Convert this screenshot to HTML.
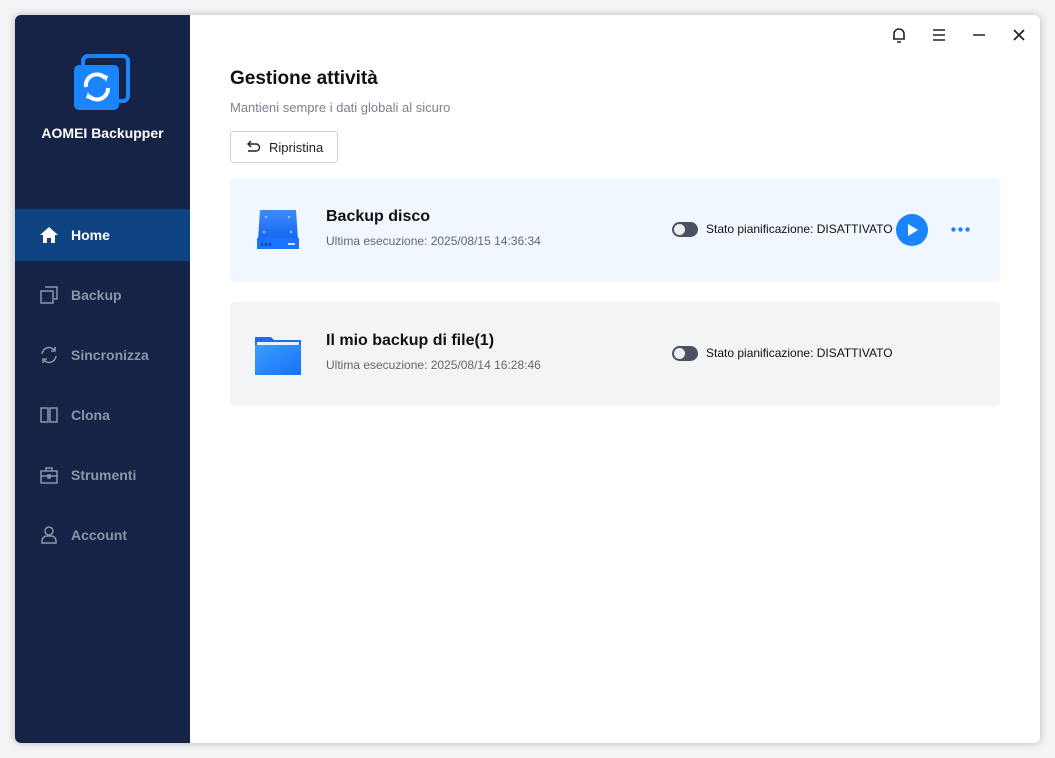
<!DOCTYPE html>
<html><head><meta charset="utf-8"><style>
*{margin:0;padding:0;box-sizing:border-box}
body{width:1055px;height:758px;background:#f3f4f6;font-family:"Liberation Sans",sans-serif;position:relative;overflow:hidden}
.win{position:absolute;left:15px;top:15px;width:1025px;height:728px;background:#fff;border-radius:6px;overflow:hidden;box-shadow:0 0 8px rgba(0,0,0,.25)}
.side{position:absolute;left:0;top:0;width:175px;height:728px;background:#142346}
.brand{position:absolute;top:110px;left:0;width:175px;text-align:center;color:#fff;font-weight:bold;font-size:14px}
.nav{position:absolute;left:0;width:175px;height:52px;color:#8c95a8;font-size:14px;font-weight:bold;display:flex;align-items:center}
.nav svg{position:absolute;left:24px}
.nav span{position:absolute;left:56px}
.nav.act{background:#0c4380;color:#fff}
.main{position:absolute;left:175px;top:0;right:0;bottom:0}
h1{position:absolute;left:40px;top:53px;font-size:19px;font-weight:bold;color:#111}
.sub{position:absolute;left:40px;top:85px;font-size:13px;color:#7a8190}
.btn{position:absolute;left:40px;top:116px;width:108px;height:32px;border:1px solid #ccd0d6;border-radius:3px;font-size:13px;color:#222;display:flex;align-items:center;padding-left:14px;gap:8px}
.card{position:absolute;left:40px;width:770px;height:104px;border-radius:4px}
.card .t{position:absolute;left:96px;top:30px;font-size:16px;font-weight:bold;color:#111}
.card .d{position:absolute;left:96px;top:56px;font-size:12px;color:#666}
.tog{position:absolute;left:442px;top:44px;width:26px;height:15px;border-radius:8px;background:#4b5160}
.tog:after{content:"";position:absolute;left:2px;top:2px;width:11px;height:11px;border-radius:50%;background:#eee}
.st{position:absolute;left:476px;top:44px;font-size:12px;color:#111}
</style></head><body>
<div class="win">
 <div class="side">
  <svg style="position:absolute;left:57px;top:39px" width="60" height="60" viewBox="0 0 60 60">
   <rect x="11" y="2" width="45" height="45" rx="5" fill="none" stroke="#1b84ff" stroke-width="4"/>
   <rect x="2" y="11" width="45" height="45" rx="5" fill="#1b84ff"/>
   <path d="M14 33a11 11 0 0 1 19-9" stroke="#fff" stroke-width="4" fill="none"/>
   <path d="M30 20l6 2-2 6z" fill="#fff"/>
   <path d="M36 34a11 11 0 0 1-19 8" stroke="#fff" stroke-width="4" fill="none"/>
   <path d="M20 46l-6-2 2-6z" fill="#fff"/>
  </svg>
  <div class="brand">AOMEI Backupper</div>
  <div class="nav act" style="top:194px"><svg width="20" height="20" viewBox="0 0 20 20"><path d="M10 2L1 10h3v8h4v-5h4v5h4v-8h3z" fill="#fff"/></svg><span>Home</span></div>
  <div class="nav" style="top:254px"><svg width="20" height="20" viewBox="0 0 20 20" fill="none" stroke="#8c95a8" stroke-width="1.5"><rect x="2" y="6" width="12" height="12"/><path d="M6 2h12v12h-3"/></svg><span>Backup</span></div>
  <div class="nav" style="top:314px"><svg width="20" height="20" viewBox="0 0 20 20" fill="none" stroke="#8c95a8" stroke-width="1.5"><path d="M3 9a7 7 0 0 1 13-3M17 11a7 7 0 0 1-13 3"/><path d="M16 2v4h-4M4 18v-4h4"/></svg><span>Sincronizza</span></div>
  <div class="nav" style="top:374px"><svg width="20" height="20" viewBox="0 0 20 20" fill="none" stroke="#8c95a8" stroke-width="1.5"><rect x="2" y="3" width="7" height="14"/><rect x="11" y="3" width="7" height="14"/></svg><span>Clona</span></div>
  <div class="nav" style="top:434px"><svg width="20" height="20" viewBox="0 0 20 20" fill="none" stroke="#8c95a8" stroke-width="1.5"><rect x="2" y="6" width="16" height="12"/><path d="M7 6V3h6v3M2 11h16"/><rect x="9" y="10" width="2" height="3"/></svg><span>Strumenti</span></div>
  <div class="nav" style="top:494px"><svg width="20" height="20" viewBox="0 0 20 20" fill="none" stroke="#8c95a8" stroke-width="1.5"><circle cx="10" cy="6" r="4"/><path d="M3 18v-2a5 5 0 0 1 5-5h4a5 5 0 0 1 5 5v2z"/></svg><span>Account</span></div>
 </div>
 <div class="main">
  <svg style="position:absolute;left:700px;top:11px" width="18" height="18" viewBox="0 0 18 18" fill="none" stroke="#222" stroke-width="1.6"><path d="M4 13V8a5 5 0 0 1 10 0v5H3h12M7 16h4"/></svg>
  <svg style="position:absolute;left:742px;top:13px" width="14" height="14" viewBox="0 0 14 14" stroke="#222" stroke-width="1.6"><path d="M1 2h12M1 7h12M1 12h12"/></svg>
  <svg style="position:absolute;left:782px;top:13px" width="14" height="14" viewBox="0 0 14 14" stroke="#222" stroke-width="1.6"><path d="M1 7h12"/></svg>
  <svg style="position:absolute;left:822px;top:13px" width="14" height="14" viewBox="0 0 14 14" stroke="#222" stroke-width="1.8"><path d="M2 2l10 10M12 2L2 12"/></svg>
  <h1>Gestione attività</h1>
  <div class="sub">Mantieni sempre i dati globali al sicuro</div>
  <div class="btn"><svg width="16" height="14" viewBox="0 0 16 14" fill="none" stroke="#222" stroke-width="1.4"><path d="M4 4h7a3.5 3.5 0 0 1 0 7H3"/><path d="M6 1L3 4l3 3"/></svg>Ripristina</div>
  <div class="card" style="top:163px;background:#f0f7fe">
   <svg style="position:absolute;left:26px;top:30px" width="44" height="44" viewBox="0 0 44 44"><defs><linearGradient id="g1" x1="0" y1="0" x2="0" y2="1"><stop offset="0" stop-color="#3d8bff"/><stop offset="1" stop-color="#1565f0"/></linearGradient></defs><path d="M4 2h36l2 30H2z" fill="url(#g1)"/><rect x="1" y="30" width="42" height="11" fill="#1a72ff"/><circle cx="10" cy="9" r="1.2" fill="#9cc3ff"/><circle cx="33" cy="9" r="1.2" fill="#9cc3ff"/><circle cx="8" cy="24" r="1.2" fill="#9cc3ff"/><circle cx="35" cy="24" r="1.2" fill="#9cc3ff"/><rect x="5" y="35" width="2" height="3" fill="#0a3fb0"/><rect x="9" y="35" width="2" height="3" fill="#0a3fb0"/><rect x="13" y="35" width="2" height="3" fill="#0a3fb0"/><rect x="32" y="35" width="7" height="2" fill="#cfe2ff"/></svg>
   <div class="t">Backup disco</div><div class="d">Ultima esecuzione: 2025/08/15 14:36:34</div>
   <div class="tog"></div><div class="st">Stato pianificazione: DISATTIVATO</div>
   <div style="position:absolute;left:666px;top:36px;width:32px;height:32px;border-radius:50%;background:#1a84ff"><svg width="32" height="32" viewBox="0 0 32 32"><path d="M12 10l10 6-10 6z" fill="#fff"/></svg></div>
   <svg style="position:absolute;left:721px;top:49px" width="20" height="5"><circle cx="2.5" cy="2.5" r="2.2" fill="#1a84ff"/><circle cx="9.5" cy="2.5" r="2.2" fill="#1a84ff"/><circle cx="16.5" cy="2.5" r="2.2" fill="#1a84ff"/></svg>
  </div>
  <div class="card" style="top:287px;background:#f3f4f6">
   <svg style="position:absolute;left:25px;top:33px" width="46" height="40" viewBox="0 0 46 40"><defs><linearGradient id="g2" x1="0" y1="0" x2="1" y2="1"><stop offset="0" stop-color="#3aa0ff"/><stop offset="1" stop-color="#1670f5"/></linearGradient></defs><path d="M0 2h16l3 3h27v35H0z" fill="#1a6ff0"/><rect x="2" y="7" width="42" height="3" fill="#e8f1ff"/><rect x="0" y="10" width="46" height="30" fill="url(#g2)"/></svg>
   <div class="t">Il mio backup di file(1)</div><div class="d">Ultima esecuzione: 2025/08/14 16:28:46</div>
   <div class="tog"></div><div class="st">Stato pianificazione: DISATTIVATO</div>
  </div>
 </div>
</div>
</body></html>
